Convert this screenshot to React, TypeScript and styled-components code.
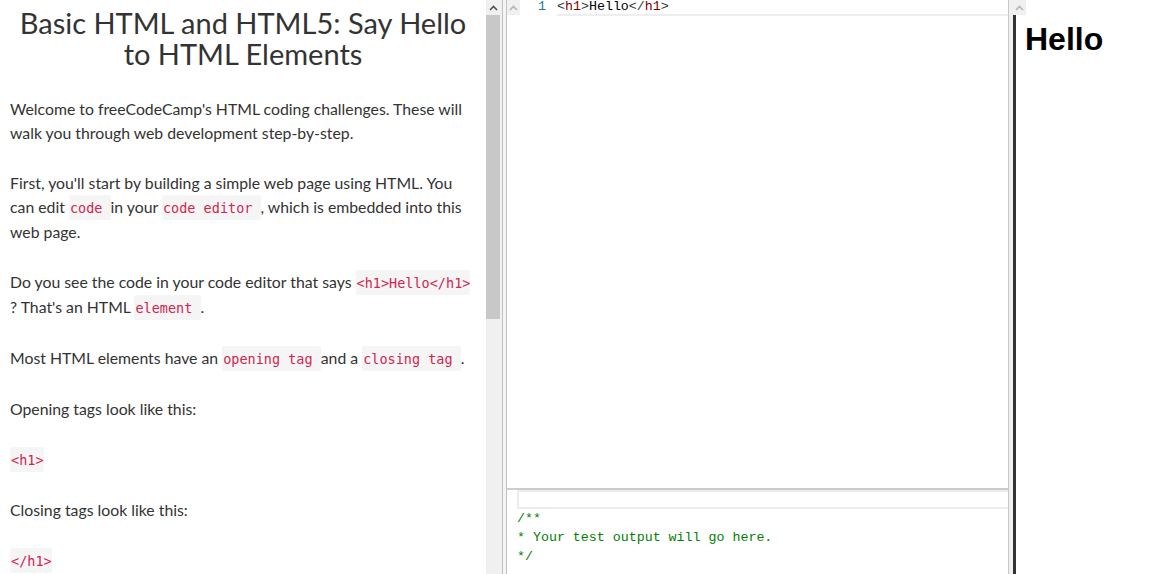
import React from "react";
import styled, { createGlobalStyle } from "styled-components";

const GlobalStyle = createGlobalStyle`
  html, body { margin: 0; padding: 0; background: #fff; overflow: hidden; }
  * { box-sizing: border-box; }
`;

const Page = styled.div`
  display: flex;
  height: 574px;
  width: 1150px;
  overflow: hidden;
`;

const LeftPane = styled.div`
  display: flex;
  width: 502px;
  flex: none;
  height: 100%;
`;

const Instructions = styled.div`
  width: 486px;
  height: 100%;
  overflow: hidden;
  padding: 7px 10px 0 10px;
  font-family: Lato, "Open Sans", sans-serif;
  color: #333;
`;

const Title = styled.h1`
  margin: 0 0 28px;
  font-size: 29px;
  line-height: 31px;
  font-weight: 400;
  text-align: center;
  color: #333;
`;

const Para = styled.p`
  margin: 0 0 26px;
  font-size: 15.8px;
  line-height: 24px;
`;

const InlineCode = styled.code`
  font-family: "DejaVu Sans Mono", monospace;
  font-size: 13.5px;
  line-height: 24px;
  color: #d1264f;
  background: #f5f5f5;
  border-radius: 2px;
  padding: 5px 0 4px 1px;
`;

const Scrollbar = styled.div`
  width: 16px;
  height: 100%;
  background: #f0f0f0;
  display: flex;
  flex-direction: column;
`;

const ArrowBox = styled.div<{ $light?: boolean }>`
  width: ${(p) => (p.$light ? "13px" : "14px")};
  height: 15px;
  flex: none;
  background: #f0f0f0;
  display: flex;
  align-items: center;
  justify-content: center;
  color: ${(p) => (p.$light ? "#b4b4b4" : "#505050")};
`;

const Thumb = styled.div`
  width: 14px;
  height: 304px;
  background: #c8c8c8;
`;

const Splitter = styled.div`
  width: 5px;
  flex: none;
  height: 100%;
  background: #f4f4f4;
  border-left: 1px solid #c2c2c2;
  border-right: 1px solid #c2c2c2;
`;

const EditorColumn = styled.div`
  width: 502px;
  flex: none;
  height: 100%;
  display: flex;
  flex-direction: column;
  border-right: 1px solid #c8c8c8;
`;

const EditorArea = styled.div`
  position: relative;
  height: 488px;
  flex: none;
  border-bottom: 2px solid #cdcdcd;
  box-sizing: content-box;
`;

const CornerArrow = styled.div`
  position: absolute;
  left: 0;
  top: 0;
`;

const CodeLine = styled.div`
  display: flex;
  height: 16px;
  font-family: "Liberation Mono", "DejaVu Sans Mono", monospace;
  font-size: 13.3px;
  line-height: 14px;
`;

const Gutter = styled.div`
  width: 50px;
  padding-right: 11px;
  text-align: right;
  color: #237893;
`;

const CodeText = styled.div`
  flex: 1;
  border-bottom: 2px solid #eeeeee;
  white-space: pre;
  color: #000;
`;

const Tok = styled.span<{ $kind: "delim" | "tag" | "text" }>`
  color: ${(p) =>
    p.$kind === "delim" ? "#383838" : p.$kind === "tag" ? "#800000" : "#000"};
`;

const OutputArea = styled.div`
  flex: 1;
  padding-left: 10px;
  display: flex;
  flex-direction: column;
`;

const OutputInput = styled.div`
  height: 19px;
  border: 2px solid #ececec;
  border-right: none;
  background: #fff;
`;

const OutputText = styled.pre`
  margin: 0;
  font-family: "Liberation Mono", "DejaVu Sans Mono", monospace;
  font-size: 13.3px;
  line-height: 19px;
  color: #008000;
`;

const Splitter2 = styled.div`
  width: 4px;
  flex: none;
  height: 100%;
  background: #f0f0f0;
`;

const Preview = styled.div`
  position: relative;
  flex: 1;
  height: 100%;
  border-left: 3px solid #333;
  padding-left: 8px;
`;

const PreviewArrow = styled.div`
  position: absolute;
  left: -3px;
  top: 0;
`;

const PreviewHeading = styled.h1`
  margin: 0;
  padding: 21px 0 0 1px;
  font-family: "Liberation Sans", Arial, sans-serif;
  font-size: 32px;
  line-height: 37px;
  font-weight: 700;
  color: #000;
`;

const Chevron = () => (
  <svg width="9" height="6" viewBox="0 0 9 6">
    <polyline
      points="1,5 4.5,1.5 8,5"
      fill="none"
      stroke="currentColor"
      strokeWidth="1.6"
    />
  </svg>
);

export default function App() {
  return (
    <>
      <GlobalStyle />
      <Page>
        <LeftPane>
          <Instructions>
            <Title>Basic HTML and HTML5: Say Hello to HTML Elements</Title>
            <Para>
              Welcome to freeCodeCamp's HTML coding challenges. These will walk
              you through web development step-by-step.
            </Para>
            <Para>
              First, you'll start by building a simple web page using HTML. You
              can edit <InlineCode>code </InlineCode>in your{" "}
              <InlineCode>code editor </InlineCode>, which is embedded into this
              web page.
            </Para>
            <Para>
              Do you see the code in your code editor that says{" "}
              <InlineCode>&lt;h1&gt;Hello&lt;/h1&gt; </InlineCode>? That's an
              HTML <InlineCode>element </InlineCode>.
            </Para>
            <Para>
              Most HTML elements have an <InlineCode>opening tag </InlineCode>
              and a <InlineCode>closing tag </InlineCode>.
            </Para>
            <Para>Opening tags look like this:</Para>
            <Para>
              <InlineCode>&lt;h1&gt; </InlineCode>
            </Para>
            <Para>Closing tags look like this:</Para>
            <Para>
              <InlineCode>&lt;/h1&gt; </InlineCode>
            </Para>
          </Instructions>
          <Scrollbar>
            <ArrowBox>
              <Chevron />
            </ArrowBox>
            <Thumb />
          </Scrollbar>
        </LeftPane>
        <Splitter />
        <EditorColumn>
          <EditorArea>
            <CornerArrow>
              <ArrowBox $light>
                <Chevron />
              </ArrowBox>
            </CornerArrow>
            <CodeLine>
              <Gutter>1</Gutter>
              <CodeText>
                <Tok $kind="delim">&lt;</Tok>
                <Tok $kind="tag">h1</Tok>
                <Tok $kind="delim">&gt;</Tok>
                <Tok $kind="text">Hello</Tok>
                <Tok $kind="delim">&lt;/</Tok>
                <Tok $kind="tag">h1</Tok>
                <Tok $kind="delim">&gt;</Tok>
              </CodeText>
            </CodeLine>
          </EditorArea>
          <OutputArea>
            <OutputInput />
            <OutputText>{"/**\n* Your test output will go here.\n*/"}</OutputText>
          </OutputArea>
        </EditorColumn>
        <Splitter2 />
        <Preview>
          <PreviewArrow>
            <ArrowBox $light>
              <Chevron />
            </ArrowBox>
          </PreviewArrow>
          <PreviewHeading>Hello</PreviewHeading>
        </Preview>
      </Page>
    </>
  );
}
